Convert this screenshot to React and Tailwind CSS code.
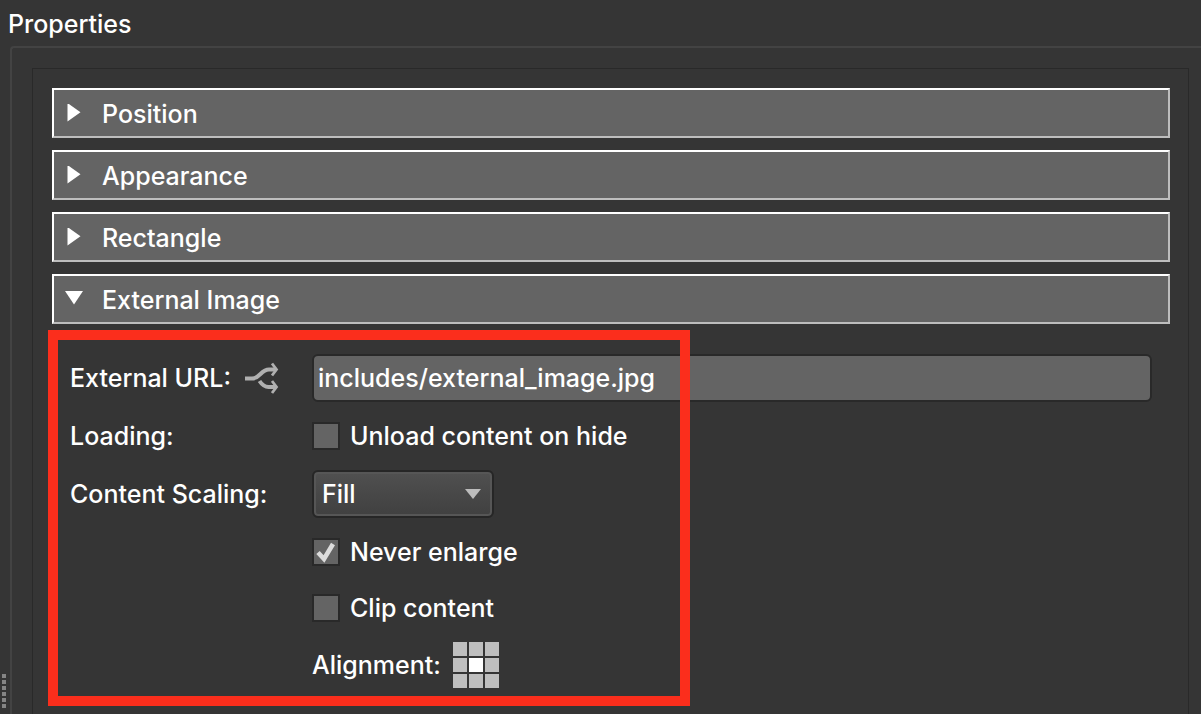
import { useState } from 'react';

const ALIGNMENTS = [
  'Top left', 'Top', 'Top right',
  'Left', 'Center', 'Right',
  'Bottom left', 'Bottom', 'Bottom right',
];

function SectionHeader({ title, open, onToggle }) {
  return (
    <button
      type="button"
      aria-expanded={open}
      onClick={onToggle}
      className="flex items-center h-[50px] w-full pl-[10px] pt-[2px] text-left bg-[#646464] border-2
        border-t-white border-l-white border-r-[#bdbdbd] border-b-[#bdbdbd]"
    >
      <svg viewBox="0 0 20 20" className="w-5 h-5 shrink-0" fill="#fff" aria-hidden="true">
        {open ? <path d="M1 1h18L10 14.5z" /> : <path d="M3.5 -1v18.5L16.5 8.2z" />}
      </svg>
      <span className="ml-[18px]">{title}</span>
    </button>
  );
}

function Checkbox({ label, checked, onChange }) {
  return (
    <label className="flex items-center gap-[10px]">
      <span className="grid w-7 h-7">
        <input
          type="checkbox"
          checked={checked}
          onChange={(e) => onChange(e.target.checked)}
          className="col-start-1 row-start-1 appearance-none w-7 h-7 bg-[#646464] border-2 border-[#292929]"
        />
        {checked && (
          <svg viewBox="0 0 28 28" className="col-start-1 row-start-1 w-7 h-7 pointer-events-none" fill="none" aria-hidden="true">
            <path d="M6 14.5l6 6.5L21 6" stroke="#dcdcdc" strokeWidth="4.6" />
          </svg>
        )}
      </span>
      {label}
    </label>
  );
}

function BranchIcon() {
  return (
    <svg viewBox="0 0 34 34" className="w-[34px] h-[34px]" fill="none" stroke="#b0b0b0" aria-hidden="true">
      <path d="M0 17.5h7c8 0 9-9 17-9h6" strokeWidth="4" />
      <path d="M14.500 20c3 4.500 5 6 9 6h7" strokeWidth="4" />
      <path d="M27 2.500l4.500 6-4.500 6M27 20l4.500 6-4.500 6" strokeWidth="2.800" />
    </svg>
  );
}

export default function App() {
  const [open, setOpen] = useState({ Position: false, Appearance: false, Rectangle: false, 'External Image': true });
  const [url, setUrl] = useState('includes/external_image.jpg');
  const [unload, setUnload] = useState(false);
  const [scaling, setScaling] = useState('Fill');
  const [neverEnlarge, setNeverEnlarge] = useState(true);
  const [clip, setClip] = useState(false);
  const [alignment, setAlignment] = useState('Center');

  return (
    <div className="flex flex-col h-screen overflow-hidden bg-[#353535] text-white font-['Inter','Liberation_Sans',sans-serif] font-medium text-[25px] leading-[30px]">
      <h1 className="px-2 pt-[9px] pb-[7px]">Properties</h1>

      <div className="flex flex-1 min-h-0">
        {/* Splitter handle */}
        <div className="flex flex-col justify-end items-center gap-[2px] w-[10px] shrink-0 pb-[6px] pr-[2px]">
          {[0, 1, 2, 3, 4, 5].map((i) => (
            <span key={i} className="w-1 h-1 bg-[#858585]" />
          ))}
        </div>

        <main className="flex flex-1 min-w-0 pt-5 pl-5 pr-3 border-t-2 border-l-2 border-[#434343] rounded-tl-sm">
          <div className="flex-1 min-w-0 pl-[19px] pr-[18px] pt-[19px] border border-b-0 border-[#292929]">
            <div className="flex flex-col gap-3">
              {Object.keys(open).map((title) => (
                <SectionHeader
                  key={title}
                  title={title}
                  open={open[title]}
                  onToggle={() => setOpen({ ...open, [title]: !open[title] })}
                />
              ))}
            </div>

            {open['External Image'] && (
              <form className="relative px-[18px] pt-[30px] pb-6">
                <div className="grid grid-cols-[242px_1fr] gap-y-[10px]">
                  <div className="flex items-center gap-[14px]">
                    <label htmlFor="url">External URL:</label>
                    <BranchIcon />
                  </div>
                  <input
                    id="url"
                    type="text"
                    value={url}
                    onChange={(e) => setUrl(e.target.value)}
                    className="h-12 w-full px-1 bg-[#646464] border-2 border-[#292929] rounded-md outline-none"
                  />

                  <span className="flex items-center h-12">Loading:</span>
                  <Checkbox label="Unload content on hide" checked={unload} onChange={setUnload} />

                  <label htmlFor="scaling" className="flex items-center h-12">Content Scaling:</label>
                  <div className="grid items-center w-[182px]">
                    <select
                      id="scaling"
                      value={scaling}
                      onChange={(e) => setScaling(e.target.value)}
                      className="col-start-1 row-start-1 appearance-none h-12 w-full px-2 rounded-md border-2 border-[#262626]
                        bg-linear-to-b from-[#505050] to-[#404040] inset-ring-2 inset-ring-[#565656] outline-none"
                    >
                      <option>Fill</option>
                      <option>Fit</option>
                      <option>Stretch</option>
                    </select>
                    <svg viewBox="0 0 16 10" className="col-start-1 row-start-1 justify-self-end w-4 h-[10px] mr-[13px] pointer-events-none" fill="#bcbcbc" aria-hidden="true">
                      <path d="M0 0h16L8 10z" />
                    </svg>
                  </div>

                  <div className="col-start-2 flex items-center h-12">
                    <Checkbox label="Never enlarge" checked={neverEnlarge} onChange={setNeverEnlarge} />
                  </div>
                  <div className="col-start-2 flex items-center h-11">
                    <Checkbox label="Clip content" checked={clip} onChange={setClip} />
                  </div>

                  <div className="col-start-2 flex items-center gap-3 h-[50px]" role="radiogroup" aria-labelledby="alignment">
                    <span id="alignment">Alignment:</span>
                    <div className="grid grid-cols-3 gap-[2px]">
                      {ALIGNMENTS.map((a) => (
                        <input
                          key={a}
                          type="radio"
                          name="alignment"
                          aria-label={a}
                          checked={alignment === a}
                          onChange={() => setAlignment(a)}
                          className="appearance-none w-[14px] h-[14px] bg-[#bfbfbf] checked:bg-white"
                        />
                      ))}
                    </div>
                  </div>
                </div>

                {/* Highlight frame */}
                <div className="absolute top-[6px] -left-1 bottom-2 w-[642px] border-10 border-[#fb2e1c] pointer-events-none" />
              </form>
            )}
          </div>
        </main>
      </div>
    </div>
  );
}
